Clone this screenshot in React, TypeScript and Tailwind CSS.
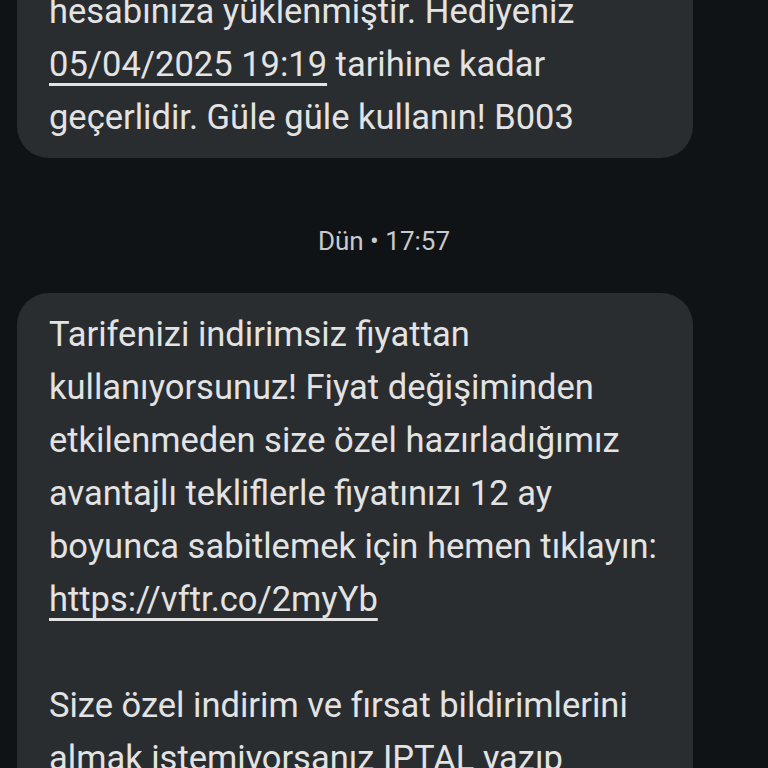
import React from "react";

const first = [
  "hesabınıza yüklenmiştir. Hediyeniz",
  <>
    <span className="underline decoration-[2.5px] underline-offset-[7px]">05/04/2025 19:19</span> tarihine kadar
  </>,
  "geçerlidir. Güle güle kullanın! B003",
];

const second: React.ReactNode[] = [
  "Tarifenizi indirimsiz fiyattan",
  "kullanıyorsunuz! Fiyat değişiminden",
  "etkilenmeden size özel hazırladığımız",
  "avantajlı tekliflerle fiyatınızı 12 ay",
  "boyunca sabitlemek için hemen tıklayın:",
  <span className="underline decoration-[2.5px] underline-offset-[7px]">https://vftr.co/2myYb</span>,
  "\u00a0",
  "Size özel indirim ve fırsat bildirimlerini",
  "almak istemiyorsanız IPTAL yazıp",
  "4499'a gönderebilirsiniz.",
];

export default function App() {
  return (
    <div
      className="w-[768px] h-[768px] overflow-hidden bg-[#101316] text-[#e3e3e3]"
      style={{ fontFamily: "Roboto, 'Noto Sans', sans-serif" }}
    >
      <div className="flex flex-col mt-[-30px]">
        <div className="ml-[17px] w-[676px] rounded-[32px] bg-[#2a2d30] pl-[32px] pt-[15px] pb-[14px] pr-[20px] text-[34.5px] leading-[53px] whitespace-nowrap">
          {first.map((l, i) => (
            <div key={i}>{l}</div>
          ))}
        </div>
        <div className="flex justify-center pt-[68px] pb-[37px] text-[26px] leading-[30px] text-[#c8cacb]">
          Dün • 17:57
        </div>
        <div className="ml-[17px] w-[676px] rounded-[32px] bg-[#2a2d30] pl-[32px] pt-[15px] pb-[15px] pr-[20px] text-[34.5px] leading-[53px] whitespace-nowrap">
          {second.map((l, i) => (
            <div key={i}>{l}</div>
          ))}
        </div>
      </div>
    </div>
  );
}
